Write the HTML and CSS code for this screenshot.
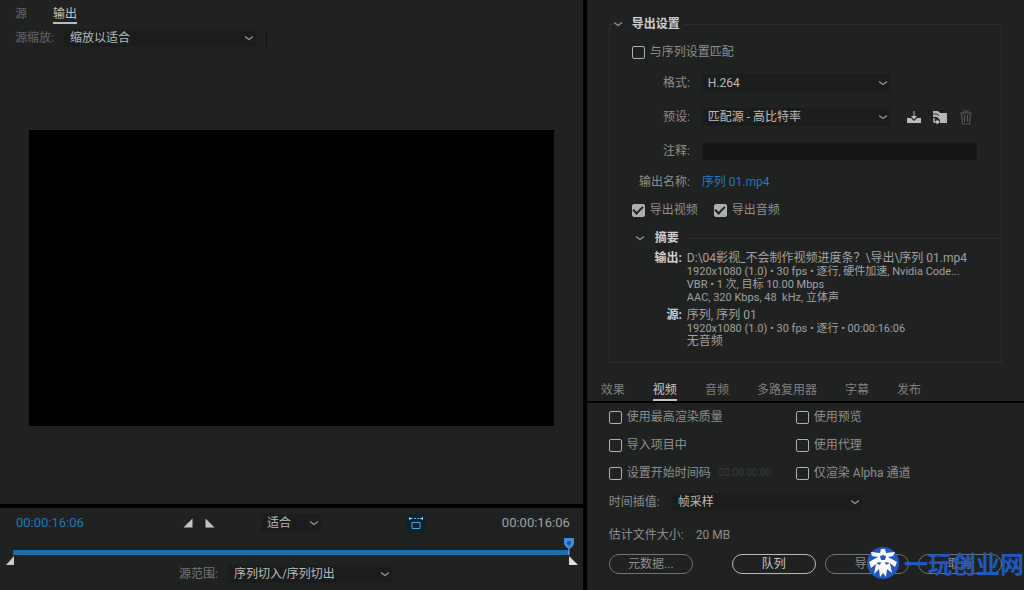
FILE: index.html
```html
<!DOCTYPE html>
<html lang="zh-CN">
<head>
<meta charset="utf-8">
<meta name="viewport" content="width=device-width, initial-scale=1">
<title>导出设置</title>
<link rel="stylesheet" href="styles.css">
</head>
<body>
<svg width="0" height="0" class="defs" aria-hidden="true">
  <symbol id="chevron" viewBox="0 0 10 6"><path d="M1 1.5L5 4.5L9 1.5" fill="none" stroke="currentColor" stroke-width="1.2"/></symbol>
</svg>
<main class="app">
  <section class="preview">
    <div class="viewer">
      <nav class="view-tabs">
        <button type="button" class="view-tab">源</button>
        <button type="button" class="view-tab is-active">输出</button>
      </nav>
      <div class="scale-row">
        <label for="scale" class="faint">源缩放:</label>
        <span class="select scale-select"><select id="scale"><option>缩放以适合</option></select><svg class="chevron"><use href="#chevron"/></svg></span>
        <span class="tick"></span>
      </div>
      <div class="stage"><div class="frame"></div></div>
    </div>
    <div class="timeline">
      <div class="transport">
        <span class="time time-in">00:00:16:06</span>
        <div class="marks">
          <button type="button" class="icon-button" aria-label="设置入点"><svg width="10" height="10" viewBox="0 0 10 10"><path d="M9.500 .5V9.500H.5z" fill="#c4c4c4"/></svg></button>
          <button type="button" class="icon-button" aria-label="设置出点"><svg width="10" height="10" viewBox="0 0 10 10"><path d="M.5 .5V9.500H9.500z" fill="#c4c4c4"/></svg></button>
        </div>
        <span class="select fit-select"><select aria-label="缩放级别"><option>适合</option></select><svg class="chevron"><use href="#chevron"/></svg></span>
        <button type="button" class="icon-button aspect" aria-label="长宽比校正"><svg width="16" height="16" viewBox="0 0 16 16" fill="none" stroke="#5f9fc4"><path d="M3 3.500H13" stroke-dasharray="2 1"/><path d="M1 2L4 3.500L1 5zM15 2L12 3.500L15 5z" fill="#b5d0df" stroke="none"/><path d="M4 7.500H12V13.500H4z"/></svg></button>
        <span class="time time-out">00:00:16:06</span>
      </div>
      <div class="track">
        <svg class="handle-in" width="8" height="9" viewBox="0 0 8 9"><path d="M8 0V9H0z" fill="#ccc"/></svg>
        <svg class="playhead" width="12" height="18" viewBox="0 0 12 18"><path d="M6 10V18" stroke="#8db4d0"/><path d="M1 1H11V7Q10 10 6 12Q2 10 1 7z" fill="#3d8ee0"/><path d="M4 4H8V7L6 9L4 7z" fill="#1d5ca8"/></svg>
        <svg class="handle-out" width="9" height="9" viewBox="0 0 9 9"><path d="M0 0V9H9z" fill="#ddd"/></svg>
      </div>
      <div class="range-row">
        <label for="range" class="dim">源范围:</label>
        <span class="select range-select"><select id="range"><option>序列切入/序列切出</option></select><svg class="chevron"><use href="#chevron"/></svg></span>
      </div>
    </div>
  </section>

  <section class="settings">
    <div class="upper">
      <fieldset class="group">
        <legend class="group-title"><svg class="chevron"><use href="#chevron"/></svg>导出设置</legend>
        <label class="check match"><input type="checkbox">与序列设置匹配</label>
        <div class="field">
          <label for="format">格式:</label>
          <span class="select field-select"><select id="format"><option>H.264</option></select><svg class="chevron"><use href="#chevron"/></svg></span>
        </div>
        <div class="field">
          <label for="preset">预设:</label>
          <div class="preset">
            <span class="select field-select"><select id="preset"><option>匹配源 - 高比特率</option></select><svg class="chevron"><use href="#chevron"/></svg></span>
            <button type="button" class="icon-button" aria-label="保存预设"><svg width="16" height="16" viewBox="0 0 16 16"><path d="M1 9H5L8 12L11 9H15V14H1z" fill="#bbb"/><path d="M7.500 2H8.500V7H11L8 10.500L5 7H7.500z" fill="#bbb"/></svg></button>
            <button type="button" class="icon-button" aria-label="导入预设"><svg width="16" height="16" viewBox="0 0 16 16"><path d="M1 2H6L8 4H15V14H8V11L5 8H1z" fill="#b5b5b5"/><path d="M2 9V13H5" fill="none" stroke="#bbb" stroke-width="1.500"/><path d="M4.500 10.500L8 13L4.500 15.500z" fill="#ccc"/><path d="M1 5H5L7 7" fill="none" stroke="#333"/></svg></button>
            <button type="button" class="icon-button" aria-label="删除预设" disabled><svg width="16" height="16" viewBox="0 0 16 16" fill="none" stroke="#555" stroke-width="1.200"><path d="M2 4H14M6 4V2H10V4M3.500 4L4.500 15H11.500L12.500 4M6.500 6V13M9.500 6V13"/></svg></button>
          </div>
        </div>
        <div class="field">
          <label for="notes">注释:</label>
          <input type="text" id="notes" class="notes">
        </div>
        <div class="field name-field">
          <span>输出名称:</span>
          <a href="#" class="file-link">序列 01.mp4</a>
        </div>
        <div class="exports">
          <label class="check"><input type="checkbox" checked>导出视频</label>
          <label class="check"><input type="checkbox" checked>导出音频</label>
        </div>
        <h2 class="summary-title"><svg class="chevron"><use href="#chevron"/></svg>摘要</h2>
        <dl class="summary">
          <dt>输出:</dt>
          <dd>
            <div>D:\04影视_不会制作视频进度条？\导出\序列 01.mp4</div>
            <div class="detail">1920x1080 (1.0) • 30 fps • 逐行, 硬件加速, Nvidia Code...</div>
            <div class="detail">VBR • 1 次, 目标 10.00 Mbps</div>
            <div class="detail">AAC, 320 Kbps, 48 &nbsp;kHz, 立体声</div>
          </dd>
          <dt>源:</dt>
          <dd>
            <div>序列, 序列 01</div>
            <div class="detail">1920x1080 (1.0) • 30 fps • 逐行 • 00:00:16:06</div>
            <div>无音频</div>
          </dd>
        </dl>
      </fieldset>
      <nav class="tabs">
        <button type="button" class="tab">效果</button>
        <button type="button" class="tab is-active">视频</button>
        <button type="button" class="tab">音频</button>
        <button type="button" class="tab">多路复用器</button>
        <button type="button" class="tab">字幕</button>
        <button type="button" class="tab">发布</button>
      </nav>
    </div>
    <div class="lower">
      <div class="options">
        <label class="check"><input type="checkbox">使用最高渲染质量</label>
        <label class="check"><input type="checkbox">使用预览</label>
        <label class="check"><input type="checkbox">导入项目中</label>
        <label class="check"><input type="checkbox">使用代理</label>
        <div class="start-time"><label class="check"><input type="checkbox">设置开始时间码</label><span class="disabled-time">00:00:00:00</span></div>
        <label class="check"><input type="checkbox">仅渲染 Alpha 通道</label>
      </div>
      <div class="interp">
        <label for="interp">时间插值:</label>
        <span class="select interp-select"><select id="interp"><option>帧采样</option></select><svg class="chevron"><use href="#chevron"/></svg></span>
      </div>
      <div class="size"><span>估计文件大小:</span><span>20 MB</span></div>
      <div class="actions">
        <button type="button" class="pill">元数据...</button>
        <button type="button" class="pill primary">队列</button>
        <button type="button" class="pill">导出</button>
        <button type="button" class="pill">取消</button>
      </div>
    </div>
  </section>
</main>
<div class="watermark">
  <svg width="34" height="34" viewBox="0 0 34 34"><circle cx="17" cy="17" r="16" fill="#1f58c0"/><path d="M15 3H19L20 7L29 6L27 10L22 11L31 16L29 21L24 17L26 27L21 23L20 31L17 27L14 31L13 23L8 28L10 18L5 22L3 16L12 11L6 10L5 6L14 7z" fill="#fff"/><path d="M14 10L17 9L20 10L19 14H15zM10 17L15 16L14 19zM24 17L19 16L20 19z" fill="#1f58c0"/></svg>
  <span>一玩创业网</span>
</div>
</body>
</html>
```
FILE: styles.css
```css
* { box-sizing: border-box; }

body {
  margin: 0;
  background: #000;
  color: #8f8f8f;
  font: 12px/16px Roboto, "Noto Sans CJK SC", sans-serif;
  position: relative;
}

button, select, input { font: inherit; color: inherit; }
button { background: none; border: 0; padding: 0; }
svg { display: block; flex: none; }
.defs { position: absolute; }

.app {
  display: grid;
  grid-template-columns: 4fr 3fr;
  gap: 4px;
  min-height: 100vh;
}

.preview, .settings { display: flex; flex-direction: column; min-width: 0; }
.viewer, .timeline, .upper, .lower { background: #202121; }

.faint { color: #666; }
.dim { color: #777; }

/* Drop-downs */
.select { display: grid; align-items: center; background: #1b1c1c; }
.select select {
  grid-area: 1 / 1;
  width: 100%;
  height: 18px;
  padding: 0 20px 0 6px;
  border: 0;
  appearance: none;
  background: none;
  color: #bbb;
  line-height: 18px;
}
.select .chevron { grid-area: 1 / 1; justify-self: end; margin-right: 2px; pointer-events: none; }
.chevron { width: 10px; height: 6px; color: #999; }
.icon-button { display: grid; place-items: center; }

/* Viewer */
.viewer { flex: 1; display: flex; flex-direction: column; }
.view-tabs { display: flex; gap: 26px; padding: 5px 15px 0; }
.view-tab { height: 19px; color: #666; border-bottom: 2px solid transparent; }
.view-tab.is-active { color: #c4c4c4; border-color: #bbb; }
.scale-row { display: flex; align-items: center; gap: 10px; padding: 5px 15px 0; }
.scale-row label { flex: none; }
.scale-select { width: 192px; }
.tick { width: 1px; height: 16px; background: #111; }
.stage { flex: 1; display: grid; align-content: center; padding: 6px 29px 1px; }
.frame { aspect-ratio: 16 / 9; background: #000; }

/* Timeline */
.timeline { margin-top: 4px; padding: 6px 10px 7px 13px; }
.transport { display: flex; align-items: center; height: 18px; padding: 0 5px 0 3px; }
.time { font-size: 13px; width: 66px; }
.time-in { color: #2376b8; }
.time-out { margin-left: auto; color: #a2a2a2; }
.marks { display: flex; gap: 12px; margin-left: 101px; }
.fit-select { width: 60px; margin-left: 46px; }
.aspect { width: 18px; height: 18px; margin-left: 86px; background: #0b2232; }
.track { position: relative; height: 5px; margin-top: 18px; margin-right: 4px; background: #176fae; }
.handle-in { position: absolute; left: -7px; top: 6px; }
.handle-out { position: absolute; right: -9px; top: 6px; }
.playhead { position: absolute; right: -6px; top: -13px; }
.range-row { display: flex; align-items: center; gap: 10px; margin: 10px 0 0 166px; }
.range-select { width: 164px; }

/* Check boxes */
.check { display: flex; align-items: center; gap: 5px; white-space: nowrap; }
.check input {
  appearance: none;
  flex: none;
  display: grid;
  place-items: center;
  width: 13px;
  height: 13px;
  margin: 0;
  border: 1px solid #b0b0b0;
  border-radius: 2px;
}
.check input:checked { background: #adadad; }
.check input:checked::before {
  content: "";
  width: 8px;
  height: 4px;
  border: solid #222;
  border-width: 0 0 2px 2px;
  transform: translateY(-1px) rotate(-45deg);
}

/* Export settings */
.upper { padding: 16px 22px 0; }
.group {
  margin: 0;
  min-width: 0;
  padding: 6px 0 14px;
  border: 1px solid #2c2c2d;
}
.group-title {
  display: flex;
  align-items: center;
  gap: 9px;
  margin-left: 3px;
  padding: 0 4px 0 0;
  color: #d0d0d0;
  font-weight: 700;
}
.match { height: 28px; margin-left: 22px; }
.field {
  display: grid;
  grid-template-columns: 80px 1fr;
  align-items: center;
  gap: 12px;
  height: 34px;
}
.field > :first-child { text-align: right; }
.field-select { width: 188px; }
.preset { display: flex; align-items: center; gap: 10px; }
.preset .field-select { margin-right: 6px; }
.notes {
  width: auto;
  height: 17px;
  margin-right: 24px;
  padding: 0 4px;
  border: 1px solid #1a1a1a;
  background: #151616;
}
.name-field { height: 28px; }
.file-link { color: #2579bc; text-decoration: none; }
.exports { display: flex; align-items: center; gap: 16px; height: 28px; margin-left: 22px; }
.summary-title {
  display: flex;
  align-items: center;
  gap: 10px;
  height: 28px;
  margin: 0 0 0 25px;
  color: #d0d0d0;
  font-size: 12px;
}
.summary-title::after { content: ""; flex: 1; height: 1px; background: #2c2c2d; }
.summary {
  display: grid;
  grid-template-columns: 72px 1fr;
  gap: 5px;
  margin: 0;
  line-height: 13px;
}
.summary dt { color: #d0d0d0; font-weight: 700; text-align: right; }
.summary dd { margin: 0; color: #a2a2a2; white-space: nowrap; }
.detail { font-size: 11px; }

.tabs { display: flex; gap: 28px; margin: 18px 0 0 -8px; }
.tab { height: 20px; color: #808080; border-bottom: 2px solid transparent; }
.tab.is-active { color: #ccc; border-color: #c4c4c4; }

/* Video tab */
.lower { flex: 1; display: flex; flex-direction: column; margin-top: 2px; padding: 0 22px 16px; }
.options { display: grid; grid-template-columns: 187px 1fr; grid-auto-rows: 28px; }
.start-time { display: flex; align-items: center; gap: 8px; }
.disabled-time { color: #393939; font-size: 10px; }
.interp { display: flex; align-items: center; gap: 12px; height: 30px; }
.interp-select { width: 190px; }
.size { display: flex; align-items: center; gap: 12px; height: 36px; }
.actions { display: flex; gap: 9px; margin-top: auto; }
.pill { flex: 0 1 84px; height: 20px; border: 1px solid #737373; border-radius: 10px; line-height: 18px; }
.pill:first-child { margin-right: 30px; }
.primary { border-color: #bbb; color: #c8c8c8; }

/* Site mark over the bottom right corner */
.watermark {
  position: absolute;
  right: 0;
  bottom: 10px;
  display: flex;
  align-items: center;
  gap: 4px;
  color: #1f58c0;
  font: 700 24px/34px "Noto Sans CJK SC", sans-serif;
  white-space: nowrap;
  pointer-events: none;
}
```
